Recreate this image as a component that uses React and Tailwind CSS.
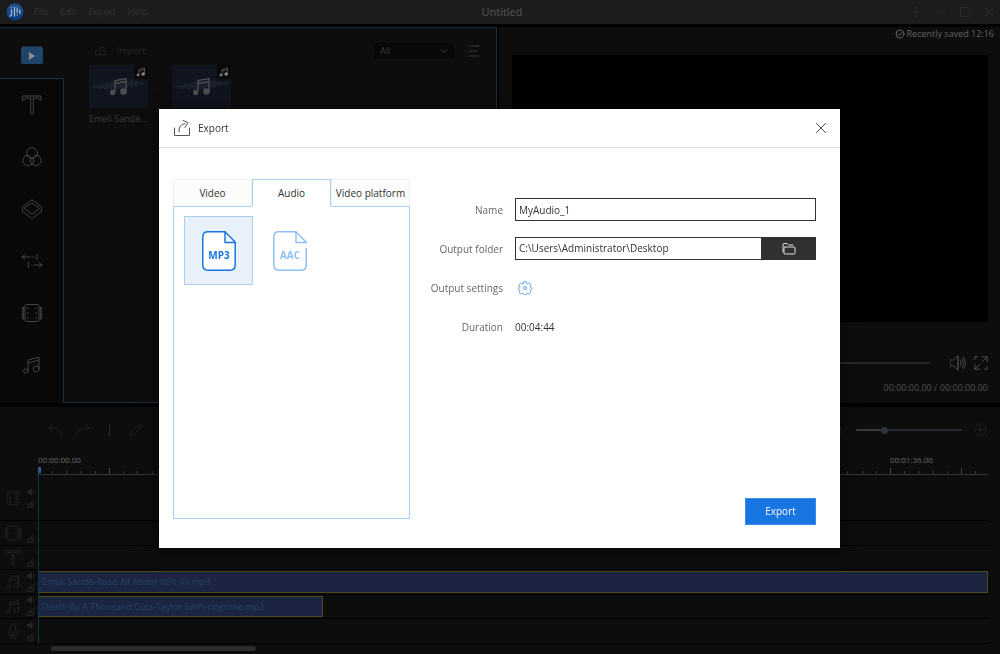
import React, { useState } from "react";

const STROKE = {
  fill: "none",
  stroke: "currentColor",
  strokeLinecap: "round",
  strokeLinejoin: "round",
};

const Icon = ({ className, box = 20, width = 1, children }) => (
  <svg viewBox={`0 0 ${box} ${box}`} className={className} strokeWidth={width} {...STROKE}>
    {children}
  </svg>
);

const LogoIcon = () => (
  <svg viewBox="0 0 18 18" className="size-[18px] shrink-0">
    <defs>
      <linearGradient id="logo" x1="0" y1="0" x2="0" y2="1">
        <stop offset="0" stopColor="#1d5590" />
        <stop offset="1" stopColor="#0d3a80" />
      </linearGradient>
    </defs>
    <circle cx="9" cy="9" r="8.5" fill="url(#logo)" />
    <g stroke="#9fb3c9" strokeWidth="1.4" strokeLinecap="round" fill="none">
      <path d="M5.500 7v4.500q0 1.500-1.500 1.500M5.500 4.600v.1M8.500 4.500v8.500M11.200 5v4.500M11.200 12v.1M13.800 7v3.500" />
    </g>
  </svg>
);

const MusicIcon = ({ className, solid }) => (
  <Icon className={className}>
    <path d="M6 16V5l11-3v11.500M6 8l11-3" />
    <circle cx="3.800" cy="16" r="2.200" fill={solid ? "currentColor" : "none"} />
    <circle cx="14.2" cy="14" r="3" fill={solid ? "currentColor" : "none"} />
  </Icon>
);

const TextIcon = ({ className }) => (
  <Icon className={className}>
    <path d="M1 1h18v4h-1.500c0-1.500-1-2-2.500-2h-3.700v14.500q0 1.500-1.300 1.500t-1.300-1.500V3H5C3.500 3 2.500 3.500 2.500 5H1z" />
  </Icon>
);

const FilterIcon = () => (
  <Icon className="size-5">
    <circle cx="10" cy="6.200" r="5.500" />
    <path d="M5 8.200A5.300 5.300 0 1 0 10 17A5.300 5.300 0 1 0 15 8.200" />
    <path d="M5 8.200q3 0 5 3 2-3 5-3M8 14.500q.2-2 2-3.500 1.800 1.500 2 3.500M10 17q-1.500-1-2-2.500M10 17q1.500-1 2-2.500" />
  </Icon>
);

const OverlayIcon = () => (
  <Icon className="size-5">
    <path d="M10 4 17.500 9.500 10 15.200 2.500 9.500z" />
    <path d="M.5 9.500Q.5 8 2 7L8.500 1.500q1.500-1 3 0L18 7q1.500 1 1.500 2.500v3M.5 9.500v3L8.500 18.700q1.500 1 3 0l8-6.200" />
  </Icon>
);

const TransitionIcon = () => (
  <Icon className="size-[22px]" box={22}>
    <path d="M9 7H1M4 4.500 1 7l3 2.500M11 7h.5M13 7h.5M16 4.500v5M13 15h8M18 12.500l3 2.500-3 2.500M10.500 15h.3M7.500 12.500v5" />
  </Icon>
);

const FilmIcon = ({ className }) => (
  <Icon className={className}>
    <rect x="3" y="1.500" width="14" height="17" rx="1.500" />
    <path d="M1 4v12M19 4v12" strokeWidth="1.500" />
    <path d="M6 5v.2M6 10v.2M6 15v.2M14 5v.2M14 10v.2M14 15v.2" strokeWidth="1.500" />
  </Icon>
);

const ReelIcon = ({ className }) => (
  <Icon className={className}>
    <path d="M17 6V3.500q0-2-1.500-2h-11q-1.500 0-1.500 2v13q0 2 1.500 2h11q1.500 0 1.500-2V10" />
    <path d="M6 4v13M14 4v13" strokeDasharray="1 2.500" strokeWidth="1.800" />
    <path d="M17 3.500h2V6" />
  </Icon>
);

const MicIcon = ({ className }) => (
  <Icon className={className}>
    <rect x="7" y="1" width="6" height="11" rx="3" />
    <path d="M4 9v1.500q0 5 6 5t6-5V9M10 15.500V19M6 19h8" />
  </Icon>
);

const SpeakerIcon = () => (
  <Icon className="size-2" box={8}>
    <path d="M.8 3h1.500L4.500 1v6L2.300 5H.8z" fill="currentColor" />
    <path d="M6.500 2.500v3" />
  </Icon>
);

const LockIcon = () => (
  <Icon className="size-2" box={8}>
    <path d="M.8 4h5.400v3.300H.8zM4.500 4V2q0-1.300 1.300-1.300T7.200 2" />
    <path d="M3.500 5.300v.8" />
  </Icon>
);

const WaveThumb = () => (
  <svg viewBox="0 0 59 43" className="h-[43px] w-[59px]">
    <path
      d="M1 22l4-1 3-1 2 1 3-3 2 2 3-3 2 2 3-4 2 2 3-3 2 3 3-4 2 3 3-2 2 3 3-3 2 3 3-1 2 2 3-1 4 2-4 1-3-1-3 3-2-2-3 3-2-2-3 4-2-3-3 4-2-3-3 3-2-2-3 2-2-3-3 2-3-2-3 1z"
      fill="#1b212c"
    />
    <g stroke="#4c4d50" fill="none" strokeWidth="1.300">
      <path d="M26 27V15.500l11-2V26M26 18.500l11-2" />
      <circle cx="23.700" cy="27.500" r="2" fill="#4c4d50" />
      <circle cx="34.500" cy="26.500" r="2.600" fill="#4c4d50" />
    </g>
  </svg>
);

const MEDIA = [{ id: 1, name: "Emeli Sandé..." }, { id: 2 }];

const TOOLS = [
  { label: "Text", icon: <TextIcon className="size-5" /> },
  { label: "Filters", icon: <FilterIcon /> },
  { label: "Overlays", icon: <OverlayIcon /> },
  { label: "Transitions", icon: <TransitionIcon /> },
  { label: "Elements", icon: <FilmIcon className="size-5" /> },
  { label: "Music", icon: <MusicIcon className="size-5" /> },
];

const TRACKS = [
  { id: "video", height: "h-[46px]", icon: <ReelIcon className="size-4" />, sound: true, tall: true },
  { id: "pip", height: "h-[25px]", icon: <FilmIcon className="size-4" /> },
  { id: "text", height: "h-6", icon: <TextIcon className="size-4" /> },
  {
    id: "audio1",
    height: "h-[25px]",
    icon: <MusicIcon className="size-4" />,
    sound: true,
    clip: "Emeli Sandé-Read All About It(Pt III).mp3",
    clipWidth: "w-full",
  },
  {
    id: "audio2",
    height: "h-6",
    icon: <MusicIcon className="size-4" />,
    sound: true,
    clip: "Death By A Thousand Cuts-Taylor Swift-ringtone.mp3",
    clipWidth: "w-[285px]",
  },
  { id: "voice", height: "h-[25px]", icon: <MicIcon className="size-4" />, sound: true },
];

// one ruler segment is 8 seconds long
const SEGMENTS = Array.from({ length: 14 }, (_, i) => i);
const LABELS = { 0: "00:00:00.00", 12: "00:01:36.00" };

const TitleBar = () => (
  <header className="grid h-6 grid-cols-[1fr_auto_1fr] items-center bg-[#1c1c1c] px-1.5 text-[#2a2a2a]">
    <div className="flex items-center gap-2.5">
      <LogoIcon />
      <nav className="flex gap-3 text-[9px] text-[#343434]">
        <button>File</button>
        <button>Edit</button>
        <button>Export</button>
        <button>Help</button>
      </nav>
    </div>
    <h1 className="pl-1 text-[11px] font-medium text-[#565656]">Untitled</h1>
    <div className="flex items-center justify-end gap-3.5">
      <button aria-label="More">
        <Icon className="size-3" box={12}>
          <circle cx="6" cy="1.500" r="1" />
          <circle cx="6" cy="6" r="1" />
          <circle cx="6" cy="10.500" r="1" />
        </Icon>
      </button>
      <button aria-label="Minimize">
        <Icon className="size-2.5" box={10}><path d="M1 5h8" /></Icon>
      </button>
      <button aria-label="Maximize">
        <Icon className="size-2.5" box={10}><rect x=".5" y=".5" width="9" height="9" rx="1" /></Icon>
      </button>
      <button aria-label="Close">
        <Icon className="size-2.5" box={10}><path d="m1 1 8 8M9 1 1 9" /></Icon>
      </button>
    </div>
  </header>
);

const Library = () => (
  <section className="flex w-[497px] shrink-0 border-t border-r border-[#1b2f42] bg-[#0d0d0d]">
    <aside className="flex w-16 flex-col">
      <button aria-label="Media" className="flex h-[50px] items-center justify-center pt-1">
        <svg viewBox="0 0 22 18" className="h-[18px] w-[22px]">
          <rect x="1" y="0" width="20" height="6" rx="2" fill="#142f49" />
          <rect x="0" y="1" width="22" height="17" rx="2" fill="#1f4468" />
          <path d="m8 6 6 4-6 4z" fill="#8c8c8c" />
        </svg>
      </button>
      <div className="flex flex-1 flex-col border-t border-r border-[#1b2f42] bg-[#080808] text-[#444]">
        {TOOLS.map((tool) => (
          <button key={tool.label} aria-label={tool.label} className="flex h-[52px] items-center justify-center">
            {tool.icon}
          </button>
        ))}
      </div>
    </aside>
    <div className="flex-1 border-b border-[#1b2f42] pt-[15px] pr-4 pl-[25px]">
      <div className="flex items-center gap-3">
        <button className="flex flex-1 items-center gap-2.5 pl-1.5 text-[9px] text-[#262626]">
          <Icon className="size-3" box={14}>
            <path d="M2 6q-1.500 1-1.500 3v2.500h12V9q0-2-1.500-3M4 8l2 2 5-6M5 4.500q1.500-2.500 5-2" />
          </Icon>
          Import
        </button>
        <div className="relative">
          <select aria-label="Media type" className="h-4 w-20 appearance-none bg-[#080808] pl-1.5 text-[9px] text-[#3c3c3c]">
            <option>All</option>
          </select>
          <Icon className="pointer-events-none absolute top-1 right-1.5 size-2 text-[#3c3c3c]" box={8}>
            <path d="m1 2.500 3 3 3-3" />
          </Icon>
        </div>
        <button aria-label="List view" className="text-[#3a3a3a]">
          <Icon className="size-3.5" box={14}>
            <path d="M4 2h9M4 7h7M4 12h9M1 2h.3M1 7h.3M1 12h.3" />
          </Icon>
        </button>
      </div>
      <ul className="mt-1.5 flex gap-6">
        {MEDIA.map((item) => (
          <li key={item.id} className="w-[59px]">
            <div className="relative bg-[#10141f]">
              <WaveThumb />
              <span className="absolute top-0 right-0 bg-[#0a0a0a] p-0.5 text-[#858585]">
                <MusicIcon className="size-2.5" solid />
              </span>
            </div>
            {item.name && <p className="mt-1 text-[9px] whitespace-nowrap text-[#3c3c3c]">{item.name}</p>}
          </li>
        ))}
      </ul>
    </div>
  </section>
);

const Preview = () => (
  <section className="flex flex-1 flex-col bg-[#0d0d0d] pr-3 pl-[13px] text-[#4d4d4d]">
    <p className="-mr-1.5 flex h-7 items-center justify-end gap-0.5 pb-3.5 text-[9px] text-[#626262]">
      <Icon className="size-2.5" box={10}>
        <circle cx="5" cy="5" r="4" />
        <path d="m3 5 1.500 1.500L7.500 3" />
      </Icon>
      Recently saved 12:16
    </p>
    <div className="min-h-[267px] flex-1 bg-black" />
    <div className="h-[81px] shrink-0 pt-[33px]">
      <div className="flex h-4 items-center">
        <input
          type="range"
          aria-label="Playback position"
          defaultValue="0"
          className="h-0.5 min-w-0 flex-1 appearance-none bg-[#24282d] [&::-webkit-slider-thumb]:size-2 [&::-webkit-slider-thumb]:appearance-none [&::-webkit-slider-thumb]:rounded-full [&::-webkit-slider-thumb]:bg-[#2b333d]"
        />
        <button aria-label="Volume" className="ml-5">
          <Icon className="size-4" box={16} width={0.9}>
            <path d="M.5 5h3L8 1v14l-4.500-4h-3zM8 1v14M10.500 5.500q1.500 2.500 0 5M12 3.500q3 4.500 0 9M13.500 2q4 6 0 12" />
          </Icon>
        </button>
        <button aria-label="Full screen" className="ml-2">
          <Icon className="size-3.5" box={14}>
            <path d="M8 .8h5.200V6M6 13.200H.8V8M3.500.8H.8v2.700M13.200 10.500v2.700h-2.700M8.500 5.500 13 1M5.500 8.500 1 13" />
          </Icon>
        </button>
      </div>
      <p className="mt-2.5 text-right text-[9px]">00:00:00.00 / 00:00:00.00</p>
    </div>
  </section>
);

const Timeline = () => (
  <section className="bg-[#0d0d0d] pr-3">
    <div className="flex h-[46px] items-center justify-between pl-12 text-[#212121]">
      <div className="flex items-center gap-3.5">
        <button aria-label="Undo">
          <Icon className="size-3.5" box={14}><path d="M13 12q0-7-8-7H1M5 1 1 5l4 4" /></Icon>
        </button>
        <button aria-label="Redo">
          <Icon className="size-3.5" box={14}><path d="M1 12q0-7 8-7h4M9 1l4 4-4 4" /></Icon>
        </button>
        <span className="mx-[5px] h-3 w-px bg-[#2b2b2b]" />
        <button aria-label="Edit clip">
          <Icon className="size-3.5" box={14}><path d="m1 13 1-4 8-8q1.500-.5 3 2l-8 8zM9 2.500 11.500 5" /></Icon>
        </button>
      </div>
      <div className="flex items-center gap-3">
        <button aria-label="Zoom out">
          <Icon className="size-3.5" box={14}><circle cx="6" cy="6" r="5" /><path d="m10 10 3 3M4 6h4" /></Icon>
        </button>
        <input
          type="range"
          aria-label="Timeline zoom"
          defaultValue="25"
          className="h-0.5 w-[106px] appearance-none bg-linear-to-r from-[#3c3c3c] from-25% to-[#24282d] to-25% [&::-webkit-slider-thumb]:size-[7px] [&::-webkit-slider-thumb]:appearance-none [&::-webkit-slider-thumb]:rounded-full [&::-webkit-slider-thumb]:bg-[#2d343e]"
        />
        <button aria-label="Zoom in">
          <Icon className="size-3.5" box={14}><circle cx="6.500" cy="6.500" r="5.500" /><path d="m11 11 2.500 2.500M4 6.500h5M6.500 4v5" /></Icon>
        </button>
      </div>
    </div>

    <div className="relative">
      <div className="ml-[38px] flex overflow-hidden border-b border-[#353535]">
        {SEGMENTS.map((i) => (
          <div key={i} className="w-[71px] shrink-0">
            <p className="h-[15px] text-[8px] leading-[13px] whitespace-nowrap text-[#6a6a6a]">{LABELS[i]}</p>
            <div className="flex h-1.5 items-end">
              <span className="h-1.5 flex-1 border-l border-[#454545]" />
              <span className="h-[3px] flex-1 border-l border-[#353535]" />
              <span className="h-[3px] flex-1 border-l border-[#353535]" />
              <span className="h-[3px] flex-1 border-l border-[#353535]" />
              <span className="h-[3px] flex-1 border-l border-[#353535]" />
            </div>
          </div>
        ))}
      </div>
      {TRACKS.map((track) => (
        <div key={track.id} className={`flex border-b border-black ${track.height}`}>
          <div className="flex w-[38px] shrink-0 items-center gap-1.5 pl-[5px] text-[#262626]">
            {track.icon}
            <div className={`flex h-full flex-col items-center gap-1 ${track.tall ? "justify-center" : "justify-end pb-0.5"}`}>
              {track.sound && <SpeakerIcon />}
              <LockIcon />
            </div>
          </div>
          {track.clip && (
            <div className={`my-px flex items-center border border-[#4b4a1c] bg-[#1b2440] pl-[3px] text-[9px] text-[#234362] ${track.clipWidth}`}>
              {track.clip}
            </div>
          )}
        </div>
      ))}
      {/* playhead */}
      <div className="absolute top-3.5 bottom-0 left-[38px] w-px bg-[#0c3548]">
        <span className="block h-1.5 w-[3px] bg-[#2c5a8c]" />
      </div>
    </div>

    <div className="h-[11px] pt-0.5 pl-[51px]">
      <div className="h-[5px] w-[205px] rounded-full bg-[#2c2c2c]" />
    </div>
  </section>
);

const FormatTile = ({ label, selected, onSelect }) => (
  <button
    onClick={onSelect}
    className={`flex size-[69px] items-center justify-center border ${
      selected ? "border-[#a9cff3] bg-[#e8f1fa] text-[#1876e2]" : "border-transparent text-[#8fc0f3]"
    }`}
  >
    <svg viewBox="0 0 34 40" className="h-10 w-[34px]">
      <path
        d="M23 .8H6Q.8.800.8 6v28q0 5.200 5.200 5.200h22q5.200 0 5.200-5.200V12z"
        fill="#fff"
      />
      <path
        d={`M23 .8H6Q.8.800.8 6v28q0 5.200 5.200 5.200h22q5.200 0 5.200-5.200V17M23 .8v10.700h10.500z${selected ? "M33.200 12v5" : ""}`}
        fill="none"
        stroke="currentColor"
        strokeWidth="1.500"
        strokeLinejoin="round"
      />
      <text x="17" y="28" textAnchor="middle" fontSize="10" fontWeight="700" fill="currentColor">
        {label}
      </text>
    </svg>
  </button>
);

const TABS = ["Video", "Audio", "Video platform"];

const ExportDialog = () => {
  const [tab, setTab] = useState("Audio");
  const [format, setFormat] = useState("MP3");
  const [name, setName] = useState("MyAudio_1");
  const [folder, setFolder] = useState("C:\\Users\\Administrator\\Desktop");

  return (
    <div className="fixed inset-0 flex items-center justify-center pt-[3px] pr-px">
      <div role="dialog" aria-label="Export" className="w-[681px] max-w-full bg-white text-[10px] text-[#333] shadow-[0_2px_16px_rgba(0,0,0,0.6)]">
        <div className="flex h-[39px] items-center border-b border-[#dcdcdc] pr-[13px] pl-[15px]">
          <Icon className="size-4 text-[#555]" box={16}>
            <path d="M.5 8v7.500h15V8M5 12q-1-7 6-8.500M9 .5l5 2-3 5" />
          </Icon>
          <h2 className="ml-2 flex-1">Export</h2>
          <button aria-label="Close dialog">
            <Icon className="size-3 text-[#444]" box={12}><path d="m1.500 1.500 9 9M10.500 1.500l-9 9" /></Icon>
          </button>
        </div>

        <div className="flex pt-[31px] pr-6 pb-[23px] pl-3.5">
          <div className="mb-1.5 flex w-[237px] shrink-0 flex-col">
            <div role="tablist" className="grid grid-cols-3">
              {TABS.map((t) => (
                <button
                  key={t}
                  role="tab"
                  aria-selected={t === tab}
                  onClick={() => setTab(t)}
                  className={`h-7 border pt-px whitespace-nowrap ${
                    t === tab
                      ? "border-[#a9cff3] border-b-white bg-white"
                      : "border-[#efefef] border-b-[#a9cff3] bg-[#fcfcfc]"
                  }`}
                >
                  {t}
                </button>
              ))}
            </div>
            <div className="flex h-[312px] items-start gap-0.5 border border-t-0 border-[#a9cff3] px-2.5 pt-[9px]">
              <FormatTile label="MP3" selected={format === "MP3"} onSelect={() => setFormat("MP3")} />
              <FormatTile label="AAC" selected={format === "AAC"} onSelect={() => setFormat("AAC")} />
            </div>
          </div>

          <form className="flex flex-1 flex-col justify-between" onSubmit={(e) => e.preventDefault()}>
            <div className="grid grid-cols-[93px_1fr] items-center gap-x-3 gap-y-4 pt-[19px] *:h-[23px]">
              <label htmlFor="name" className="text-right leading-6 text-[#666]">Name</label>
              <input
                id="name"
                value={name}
                onChange={(e) => setName(e.target.value)}
                className="min-w-0 border border-[#333] px-[3px]"
              />
              <label htmlFor="folder" className="text-right leading-6 text-[#666]">Output folder</label>
              <div className="flex">
                <input
                  id="folder"
                  value={folder}
                  onChange={(e) => setFolder(e.target.value)}
                  className="min-w-0 flex-1 border border-[#333] px-[3px]"
                />
                <button type="button" aria-label="Browse" className="flex w-[54px] items-center justify-center bg-[#303030] text-[#ddd]">
                  <Icon className="size-3.5" box={14}>
                    <path d="M1 10V2.500Q1 1.500 2 1.500h3L6.500 3H11M3 5h9q1 0 1 1v5q0 1-1 1H3q-1 0-1-1V6q0-1 1-1" />
                  </Icon>
                </button>
              </div>
              <span className="text-right leading-6 text-[#666]">Output settings</span>
              <button type="button" aria-label="Output settings" className="ml-[3px] justify-self-start text-[#69a9ee]">
                <Icon className="size-3.5" box={14}>
                  <path d="M5.800.7h2.400l.4 1.700 1.300.5 1.500-.9 1.600 1.600-.9 1.500.5 1.300 1 .2v1.800l-1 .3-.5 1.300.9 1.500-1.600 1.600-1.500-.9-1.300.5-.4 1H5.800l-.4-1-1.300-.5-1.500.9L1 11.500 1.900 10l-.5-1.300-1-.3V6.600l1-.2.5-1.300L1 3.600 2.600 2l1.500.9 1.300-.5z" />
                  <circle cx="7" cy="7" r="1.500" />
                </Icon>
              </button>
              <span className="text-right leading-6 text-[#666]">Duration</span>
              <span className="leading-6">00:04:44</span>
            </div>
            <button type="submit" className="h-[27px] w-[71px] self-end border border-[#3a8cec] bg-[#1876e2] text-white">
              Export
            </button>
          </form>
        </div>
      </div>
    </div>
  );
};

const App = () => (
  <div className="flex min-h-screen flex-col bg-black font-['Open_Sans','Noto_Sans',sans-serif] text-[10px]">
    <TitleBar />
    <main className="mt-[3px] mb-1 flex flex-1 gap-0.5">
      <Library />
      <Preview />
    </main>
    <Timeline />
    <ExportDialog />
  </div>
);

export default App;
